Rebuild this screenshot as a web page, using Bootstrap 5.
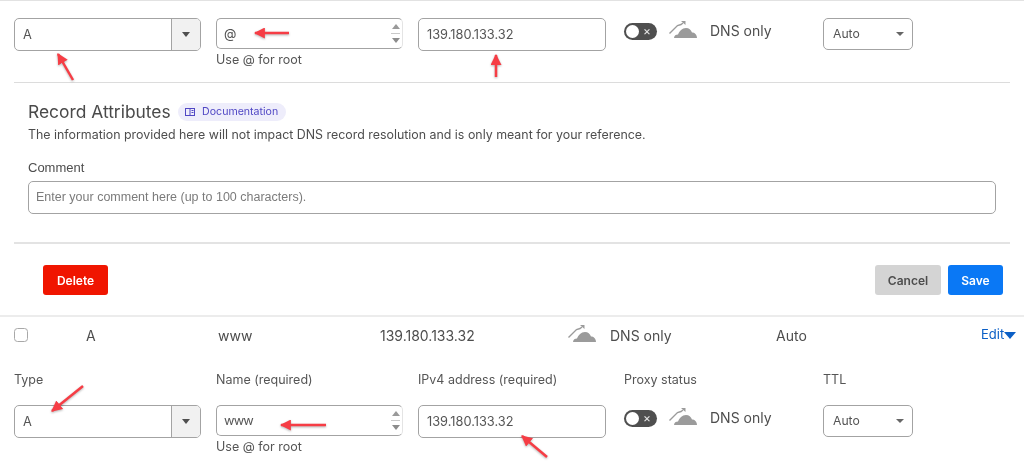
<!doctype html>
<html lang="en">
<head>
<meta charset="utf-8">
<title>DNS records</title>
<link rel="stylesheet" href="https://cdn.jsdelivr.net/npm/bootstrap@5.3.0/dist/css/bootstrap.min.css">
<style>
html,body{height:465px;overflow:hidden}
body{font-family:Inter,"Liberation Sans",sans-serif;color:#4a4a4a;font-size:12.5px;background:#fff;position:relative;filter:blur(.35px)}
.top-rule{height:1px;background:#e2e2e2}
.edit-row{display:flex;padding-left:14px;align-items:flex-start}
.f-type{width:187px;margin-right:15px}
.f-name{width:187px;margin-right:15px}
.f-ip{width:188px;margin-right:18px}
.f-proxy{width:199px}
.f-ttl{width:90px}
.first-row{padding-top:17px;height:81px}
.second-row{height:111px;padding-top:15px}
.lbl{height:37px;line-height:18px;padding-top:3px;font-size:12.5px;color:#555}
.ctl{height:33px;border:1px solid #a3a3a3;border-radius:5px;display:flex;align-items:center;background:#fff;font-size:12.8px;color:#555}
.ctl-text{padding-left:8px;flex:1}
.ctl-www{letter-spacing:-.8px}
.ctl-arrow{width:29px;height:100%;border-left:1px solid #a3a3a3;background:#f1f1f1;border-radius:0 4px 4px 0;display:flex;align-items:center;justify-content:center}
.tri{width:0;height:0;border-left:4.5px solid transparent;border-right:4.5px solid transparent;border-top:5px solid #4f4f4f}
.ctl-name{height:31px;border-right-color:#e4e4e4}
.ctl-name .ctl-text{padding-left:7px}
.spin{width:13px;height:100%;display:flex;flex-direction:column;align-items:center;justify-content:center;gap:4px}
.spin i{display:block;width:0;height:0;border-left:4px solid transparent;border-right:4px solid transparent}
.spin .u{border-bottom:5px solid #9a9a9a}
.spin .d{border-top:5px solid #8c8c8c}
.spin b{display:block;width:9px;height:1px;background:#c9c9c9}
.hint{font-size:12.5px;line-height:15px;margin-top:3px;color:#555}
.tgl{width:33px;height:17px;border-radius:9px;background:#4f4f4f;position:relative;flex:none;color:#e6e6e6;font-size:12px;line-height:16px;text-align:right;padding-right:6px}
.tgl::before{content:"";position:absolute;left:2px;top:2px;width:13px;height:13px;border-radius:50%;background:#fff}
.proxy{display:flex;align-items:center;height:28px;margin-top:-1px}
.proxy svg{margin-left:12px;flex:none;position:relative;top:-1px}
.dns{margin-left:13px;font-size:14px;color:#4d4d4d;position:relative;top:-1px}
.proxy .dns{margin-left:12px}
.ctl-ttl{height:32px;justify-content:space-between;padding:0 8px 0 9px;font-size:12.2px}
.ttl-tri{border-left-width:4px;border-right-width:4px;border-top-width:4px;border-top-color:#666}
.rule{height:1px;background:#dcdcdc;margin:0 14px}
.attrs{padding:19px 28px 0;height:159px}
.attr-head{display:flex;align-items:center;height:20px}
.attr-title{font-size:17.4px;color:#4a4a4a;line-height:20px}
.doc-pill{margin-left:7px;height:18px;width:108px;border-radius:9px;background:#eeedfb;color:#5047c4;font-size:10.6px;display:flex;align-items:center;justify-content:center;gap:7px}
.attr-note{font-size:12.4px;margin-top:3px;line-height:20px;color:#4d4d4d}
.c-label{margin-top:14px;line-height:18px;font-family:"Liberation Sans",sans-serif;font-size:13px;color:#4d4d4d}
.c-input{height:33px;margin-top:4px;border:1px solid #a3a3a3;border-radius:5px;padding-left:7px;display:flex;align-items:center;color:#7b7b7b;font-family:"Liberation Sans",sans-serif;font-size:12.5px}
.rule-2{height:2px;background:#e3e3e3;margin:0 14px}
.act{display:flex;justify-content:space-between;align-items:center;height:71px;padding:0 21px 0 43px}
.act .btn{height:30px;padding:1px 0 0;font-size:12px;font-weight:600;border:0;border-radius:3px;line-height:29px}
.b-del{width:65px;background:#f01500;color:#fff}
.b-can{width:66px;background:#d4d4d4;color:#4d4d4d}
.b-sav{width:55px;background:#0a78f5;color:#fff;margin-left:7px}
.rule-3{height:2px;background:#ececec}
.list-row{display:flex;align-items:center;height:36px;font-size:14px;color:#4d4d4d;position:relative;padding-left:14px}
.chk{width:14px;height:14px;border:1px solid #a8a8a8;border-radius:3.5px;background:#fff;margin-right:58px;flex:none}
.c-a{width:132px}.c-w{width:162px}.c-i{width:188px}.c-d{display:flex;align-items:center;width:208px}
.c-d svg{margin-right:13px;position:relative;top:-1px}
.c-t{width:205px}
.edit-lnk{color:#0b5fc6;font-size:13px;display:flex;align-items:center;text-decoration:none}
.edit-lnk .tri{border-left-width:6.5px;border-right-width:6.5px;border-top:7px solid #0b5fc6}
.note-arrow{position:absolute;left:0;top:0;overflow:visible;pointer-events:none;filter:drop-shadow(0 1px 1px rgba(0,0,0,.3))}
</style>
</head>
<body>
<svg width="0" height="0" class="d-block position-absolute">
  <defs>
    <symbol id="cloud" viewBox="0 0 29 18">
      <path d="M5 17C5 14.500 7 13.500 9 13.500 10.500 10 13 7 17 7 20 7 22 9 23 11.500 25.500 11.500 28 13.500 28 17z" fill="#9b9b9b"/>
      <path d="M.5 12.500 8.500 4.500 12 3.500 14 2" fill="none" stroke="#9b9b9b" stroke-width="1.400"/>
      <path d="M12 0h4.500v4z" fill="#9b9b9b"/>
    </symbol>
    <marker id="ah" viewBox="0 0 10 10" refX="9" refY="5" markerUnits="userSpaceOnUse" markerWidth="11" markerHeight="11" orient="auto"><path d="M0 0 10 5 0 10z" fill="#f63d45"/></marker>
  </defs>
</svg>

<div class="top-rule"></div>

<div class="edit-row first-row">
  <div class="f-type">
    <div class="ctl"><span class="ctl-text">A</span><span class="ctl-arrow"><span class="tri"></span></span></div>
  </div>
  <div class="f-name">
    <div class="ctl ctl-name"><span class="ctl-text">@</span><span class="spin"><i class="u"></i><b></b><i class="d"></i></span></div>
    <div class="hint">Use @ for root</div>
  </div>
  <div class="f-ip">
    <div class="ctl"><span class="ctl-text">139.180.133.32</span></div>
  </div>
  <div class="f-proxy">
    <div class="proxy"><span class="tgl">×</span><svg width="29" height="18"><use href="#cloud"/></svg><span class="dns">DNS only</span></div>
  </div>
  <div class="f-ttl">
    <div class="ctl ctl-ttl"><span>Auto</span><span class="tri ttl-tri"></span></div>
  </div>
</div>

<div class="rule"></div>

<div class="attrs">
  <div class="attr-head">
    <span class="attr-title">Record Attributes</span>
    <span class="doc-pill">
      <svg width="10" height="10" viewBox="0 0 10 10" fill="none" stroke="#5047c4"><rect x=".5" y="1.500" width="9" height="7"/><path d="M5 1.500v7M6.500 3.500h2M6.500 5.500h2"/></svg>
      Documentation
    </span>
  </div>
  <div class="attr-note">The information provided here will not impact DNS record resolution and is only meant for your reference.</div>
  <div class="c-label">Comment</div>
  <div class="c-input">Enter your comment here (up to 100 characters).</div>
</div>

<div class="rule-2"></div>

<div class="act">
  <button type="button" class="btn b-del">Delete</button>
  <div class="d-flex">
    <button type="button" class="btn b-can">Cancel</button>
    <button type="button" class="btn b-sav">Save</button>
  </div>
</div>

<div class="rule-3"></div>

<div class="list-row">
  <span class="chk"></span>
  <span class="c-a">A</span>
  <span class="c-w">www</span>
  <span class="c-i">139.180.133.32</span>
  <span class="c-d"><svg width="29" height="18"><use href="#cloud"/></svg>DNS only</span>
  <span class="c-t">Auto</span>
  <a class="edit-lnk" href="#">Edit<span class="tri"></span></a>
</div>

<div class="edit-row second-row">
  <div class="f-type"><div class="lbl">Type</div>
    <div class="ctl"><span class="ctl-text">A</span><span class="ctl-arrow"><span class="tri"></span></span></div>
  </div>
  <div class="f-name"><div class="lbl">Name (required)</div>
    <div class="ctl ctl-name"><span class="ctl-text ctl-www">www</span><span class="spin"><i class="u"></i><b></b><i class="d"></i></span></div>
    <div class="hint">Use @ for root</div>
  </div>
  <div class="f-ip"><div class="lbl">IPv4 address (required)</div>
    <div class="ctl"><span class="ctl-text">139.180.133.32</span></div>
  </div>
  <div class="f-proxy"><div class="lbl">Proxy status</div>
    <div class="proxy"><span class="tgl">×</span><svg width="29" height="18"><use href="#cloud"/></svg><span class="dns">DNS only</span></div>
  </div>
  <div class="f-ttl"><div class="lbl">TTL</div>
    <div class="ctl ctl-ttl"><span>Auto</span><span class="tri ttl-tri"></span></div>
  </div>
</div>

<svg class="note-arrow" width="1024" height="465" viewBox="0 0 1024 465" fill="none" stroke="#f63d45" stroke-width="2.500">
  <path d="M73 80 58 54" marker-end="url(#ah)"/>
  <path d="M289 33H255" marker-end="url(#ah)"/>
  <path d="M496 77V55" marker-end="url(#ah)"/>
  <path d="M83 386 52 411" marker-end="url(#ah)"/>
  <path d="M326 425H281" marker-end="url(#ah)"/>
  <path d="M547 457 522 436" marker-end="url(#ah)"/>
</svg>
<script src="https://cdn.jsdelivr.net/npm/bootstrap@5.3.0/dist/js/bootstrap.bundle.min.js"></script>
</body>
</html>
